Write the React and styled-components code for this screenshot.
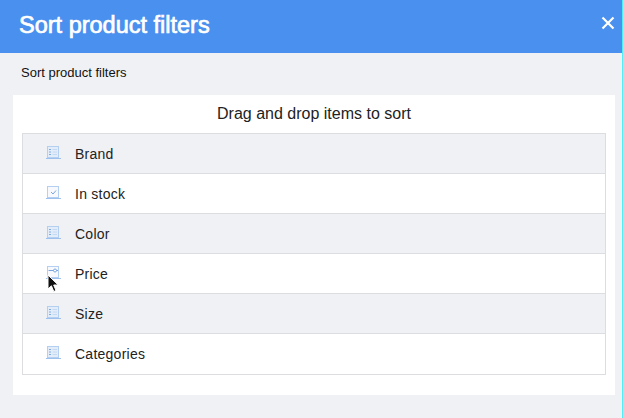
import styled, { createGlobalStyle } from "styled-components";

const GlobalStyle = createGlobalStyle`
    html, body {
        margin: 0;
        padding: 0;
        background: #f0f1f5;
    }
`

const filters = [
    { name: "Brand", icon: "list" },
    { name: "In stock", icon: "check" },
    { name: "Color", icon: "list" },
    { name: "Price", icon: "slider", cursor: true },
    { name: "Size", icon: "list" },
    { name: "Categories", icon: "list" },
];

const FilterIcon = ({ type }) => (
    <StyledIcon width="16" height="14" viewBox="0 0 16 14">
        <rect x="2.5" y="0.5" width="11" height="11" fill={type === "list" ? "#e3edf9" : "#f7f9fd"} stroke="#b3d0f2" />
        <line x1="1" y1="12.5" x2="16" y2="12.5" stroke="#9dc0ec" />
        {type === "list" && (
            <g stroke="#7faae2">
                <line x1="4" y1="3.5" x2="6" y2="3.5" />
                <line x1="7.5" y1="3.5" x2="12" y2="3.5" stroke="#c4d9f4" />
                <line x1="4" y1="6" x2="6" y2="6" />
                <line x1="7.5" y1="6" x2="12" y2="6" stroke="#c4d9f4" />
                <line x1="4" y1="8.5" x2="6" y2="8.5" />
                <line x1="7.5" y1="8.5" x2="12" y2="8.5" stroke="#c4d9f4" />
            </g>
        )}
        {type === "check" && <path d="M6 6 L8 8 L11 4.5" fill="none" stroke="#7ba6df" />}
        {type === "slider" && (
            <g stroke="#7ba6df" fill="#fff">
                <line x1="3.5" y1="4.5" x2="13" y2="4.5" />
                <circle cx="10" cy="4.5" r="1.5" />
            </g>
        )}
    </StyledIcon>
);

const Cursor = () => (
    <StyledCursor width="13" height="20" viewBox="0 0 13 20">
        <path d="M1 1 L1 15 L4.4 11.8 L6.8 17.5 L9 16.5 L6.7 11 L11.2 11 Z" fill="#111" stroke="#fff" strokeWidth="1" />
    </StyledCursor>
);

const App = () => {
    return (
        <StyledPage>
            <GlobalStyle />
            <StyledHeader>
                <StyledTitle>Sort product filters</StyledTitle>
                <StyledClose width="14" height="14" viewBox="0 0 14 14">
                    <path d="M1.5 1.5 L12.5 12.5 M12.5 1.5 L1.5 12.5" stroke="#fff" strokeWidth="2.2" />
                </StyledClose>
            </StyledHeader>
            <StyledSubtitle>Sort product filters</StyledSubtitle>
            <StyledCard>
                <StyledHint>Drag and drop items to sort</StyledHint>
                <StyledList>
                    {filters.map((filter, i) => (
                        <StyledRow key={filter.name} $shaded={i % 2 === 0}>
                            <StyledIconWrap>
                                <FilterIcon type={filter.icon} />
                                {filter.cursor && <Cursor />}
                            </StyledIconWrap>
                            {filter.name}
                        </StyledRow>
                    ))}
                </StyledList>
            </StyledCard>
            <StyledEdge />
        </StyledPage>
    );
}

const StyledPage = styled.div`
    position:relative;
    width:623px;
    height:418px;
    overflow:hidden;
    background:#f0f1f5;
    font-family:"Liberation Sans", Arial, sans-serif;
`
const StyledHeader = styled.div`
    display:flex;
    align-items:center;
    justify-content:space-between;
    height:53px;
    padding:0 8px 0 19px;
    background:#4a90ee;
    color:white;
`
const StyledTitle = styled.div`
    font-size:23.5px;
    -webkit-text-stroke:0.7px white;
    margin-top:-2px;
`
const StyledClose = styled.svg`
    display:block;
    margin-top:-7px;
`
const StyledSubtitle = styled.div`
    height:42px;
    padding-left:21px;
    font-size:13px;
    line-height:40px;
    color:#111;
`
const StyledCard = styled.div`
    width:584px;
    height:300px;
    margin-left:13px;
    padding:0 9px;
    background:white;
`
const StyledHint = styled.div`
    height:38px;
    font-size:16px;
    line-height:37px;
    text-align:center;
    color:#222;
`
const StyledList = styled.div`
    border:1px solid #dcdde1;
    border-bottom:0;
`
const StyledRow = styled.div`
    display:flex;
    align-items:center;
    height:39px;
    border-bottom:1px solid #dcdde1;
    padding-left:22px;
    font-size:14px;
    letter-spacing:0.25px;
    color:#222;
    background:${props => props.$shaded ? "#f0f1f5" : "white"};
    &:last-child {
        height:40px;
    }
`
const StyledIconWrap = styled.div`
    position:relative;
    width:30px;
    height:14px;
    margin-top:-2px;
`
const StyledIcon = styled.svg`
    display:block;
`
const StyledCursor = styled.svg`
    position:absolute;
    left:2px;
    top:8px;
`
const StyledEdge = styled.div`
    position:absolute;
    top:0;
    right:0;
    width:1px;
    height:100%;
    background:#4ff0f5;
`

export default App;
